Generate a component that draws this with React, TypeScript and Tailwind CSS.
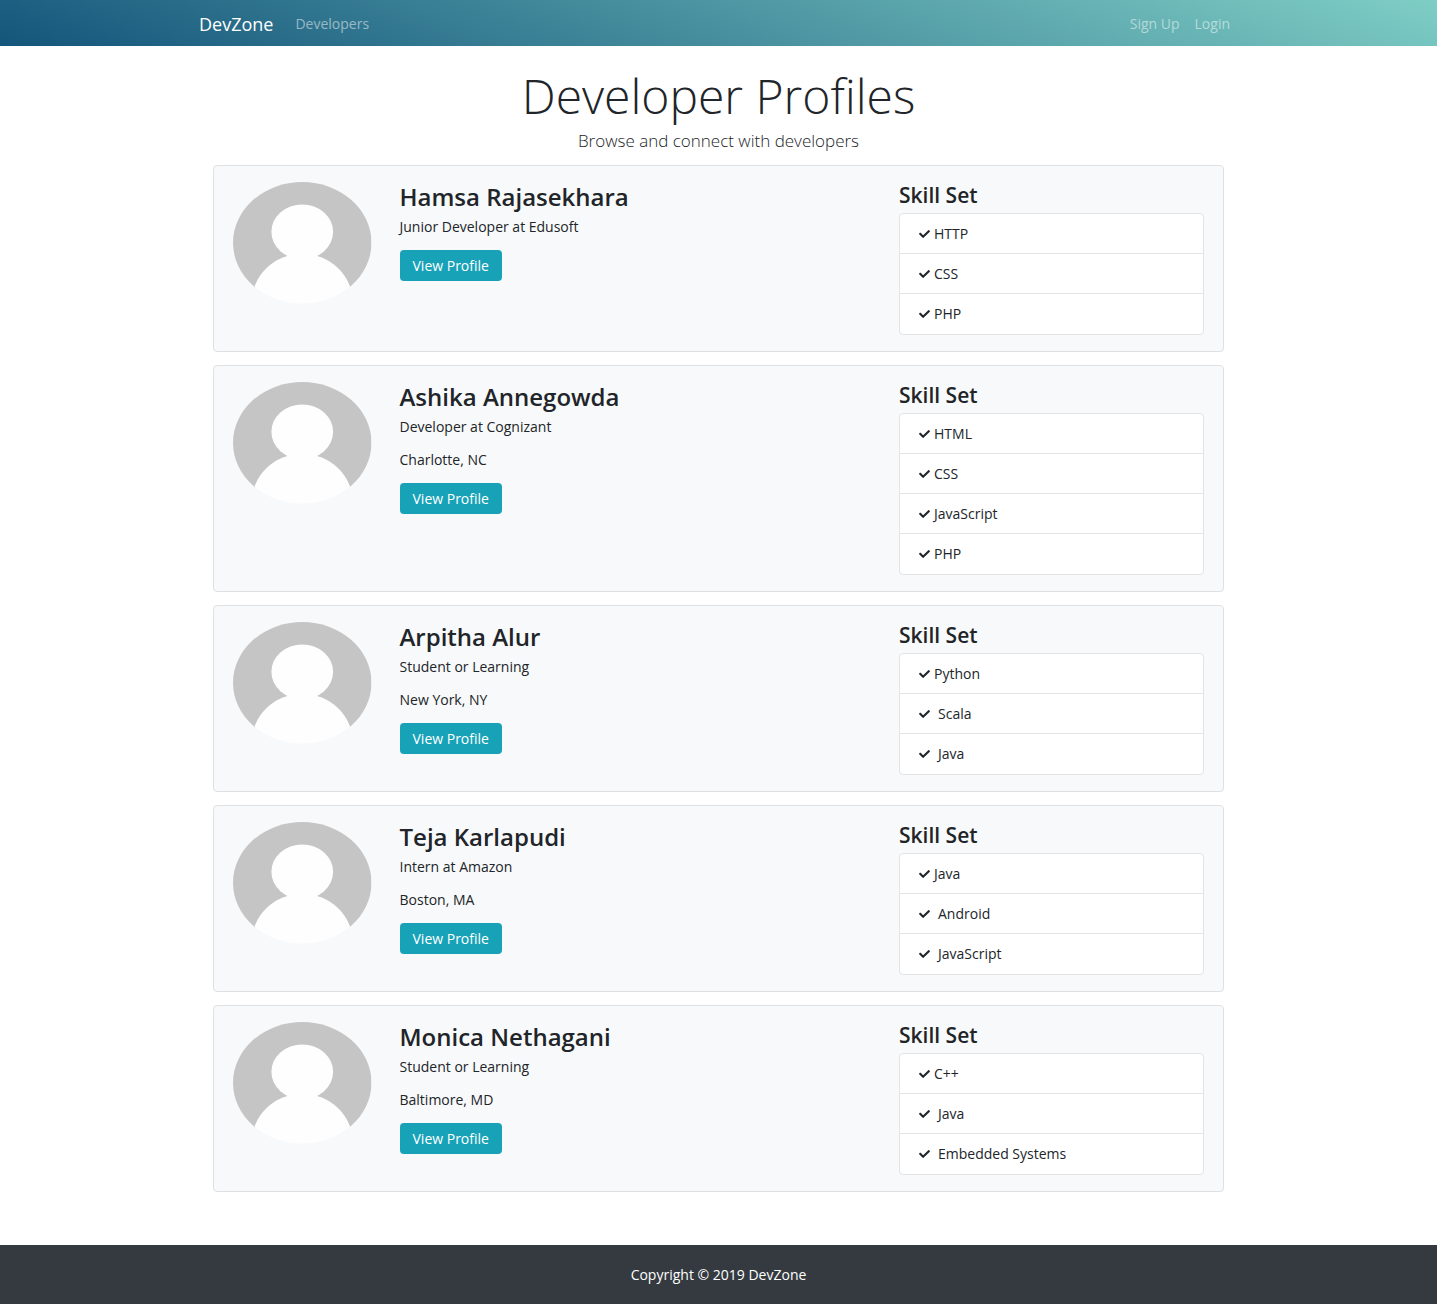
type Skill = { name: string; spaced?: boolean };

type Developer = {
  name: string;
  role: string;
  location?: string;
  skills: Skill[];
};

const developers: Developer[] = [
  {
    name: 'Hamsa Rajasekhara',
    role: 'Junior Developer at Edusoft',
    skills: [{ name: 'HTTP' }, { name: 'CSS' }, { name: 'PHP' }],
  },
  {
    name: 'Ashika Annegowda',
    role: 'Developer at Cognizant',
    location: 'Charlotte, NC',
    skills: [{ name: 'HTML' }, { name: 'CSS' }, { name: 'JavaScript' }, { name: 'PHP' }],
  },
  {
    name: 'Arpitha Alur',
    role: 'Student or Learning',
    location: 'New York, NY',
    skills: [{ name: 'Python' }, { name: 'Scala', spaced: true }, { name: 'Java', spaced: true }],
  },
  {
    name: 'Teja Karlapudi',
    role: 'Intern at Amazon',
    location: 'Boston, MA',
    skills: [{ name: 'Java' }, { name: 'Android', spaced: true }, { name: 'JavaScript', spaced: true }],
  },
  {
    name: 'Monica Nethagani',
    role: 'Student or Learning',
    location: 'Baltimore, MD',
    skills: [{ name: 'C++' }, { name: 'Java', spaced: true }, { name: 'Embedded Systems', spaced: true }],
  },
];

function Avatar({ id, name }: { id: string; name: string }) {
  return (
    <svg viewBox="0 0 139 122" className="block w-full" role="img" aria-label={name}>
      <clipPath id={id}>
        <ellipse cx="69.5" cy="61" rx="69.5" ry="61" />
      </clipPath>
      <g clipPath={`url(#${id})`}>
        <path d="M0 0h139v106H0z" fill="#c5c5c5" />
        <ellipse cx="69.5" cy="50" rx="31" ry="27.5" fill="#fefefe" />
        <ellipse cx="69.5" cy="122" rx="51" ry="50" fill="#fefefe" />
      </g>
    </svg>
  );
}

function CheckIcon() {
  return (
    <svg
      viewBox="0 65.98 512 380.04"
      preserveAspectRatio="none"
      className="h-2 w-[11px] shrink-0"
      fill="currentColor"
      aria-hidden="true"
    >
      <path d="M173.898 439.404l-166.4-166.4c-9.997-9.997-9.997-26.206 0-36.204l36.203-36.204c9.997-9.998 26.207-9.998 36.204 0L192 312.69 432.095 72.596c9.997-9.997 26.207-9.997 36.204 0l36.203 36.204c9.997 9.997 9.997 26.206 0 36.204l-294.4 294.401c-9.998 9.997-26.207 9.997-36.204-.001z" />
    </svg>
  );
}

function DeveloperCard({ developer, id }: { developer: Developer; id: string }) {
  return (
    <li className="grid grid-cols-12 gap-7 rounded border border-[#dfe0e1] bg-[#f8f9fa] px-[19px] py-4">
      <div className="col-span-2">
        <Avatar id={id} name={developer.name} />
      </div>
      <div className="col-span-6">
        <h3 className="mb-[5px] text-2xl leading-[30px] font-semibold">{developer.name}</h3>
        <p className="mb-[13px] leading-5">{developer.role}</p>
        {developer.location && <p className="mb-[13px] leading-5">{developer.location}</p>}
        <a
          href="#profile"
          className="inline-block rounded bg-[#17a2b8] px-[13px] py-1 leading-[23px] text-white hover:bg-[#138496]"
        >
          View Profile
        </a>
      </div>
      <div className="col-span-4">
        <h4 className="mb-[5px] text-[21px] leading-[26px] font-semibold">Skill Set</h4>
        <ul className="divide-y divide-[#e3e4e5] rounded border border-[#e3e4e5] bg-white">
          {developer.skills.map((skill) => (
            <li key={skill.name} className="flex h-10 items-center gap-1 px-[19px]">
              <CheckIcon />
              <span className={skill.spaced ? 'pl-1' : ''}>{skill.name}</span>
            </li>
          ))}
        </ul>
      </div>
    </li>
  );
}

export default function App() {
  return (
    <div className="flex min-h-screen flex-col bg-white font-['Open_Sans','Noto_Sans',sans-serif] text-sm text-[#212529]">
      <nav className="bg-[linear-gradient(20deg,#14557b,#7fcec5)]">
        <div className="mx-auto flex h-[46px] max-w-[1039px] items-center pt-px pr-2">
          <a href="#home" className="text-lg leading-7 text-white">
            DevZone
          </a>
          <a href="#developers" className="ml-[22px] text-white/50 hover:text-white/75">
            Developers
          </a>
          <div className="ml-auto flex gap-[15px]">
            <a href="#signup" className="text-white/50 hover:text-white/75">
              Sign Up
            </a>
            <a href="#login" className="text-white/50 hover:text-white/75">
              Login
            </a>
          </div>
        </div>
      </nav>

      <main className="mx-auto w-full max-w-[1011px] pt-[21px] pb-[53px]">
        <h1 className="text-center text-5xl leading-[58px] font-light">Developer Profiles</h1>
        <p className="mt-1 mb-3 text-center text-[17px] leading-6 font-light">
          Browse and connect with developers
        </p>
        <ul className="flex flex-col gap-[13px]">
          {developers.map((developer, index) => (
            <DeveloperCard key={developer.name} developer={developer} id={`avatar-${index}`} />
          ))}
        </ul>
      </main>

      <footer className="mt-auto bg-[#343a40] py-5 text-center leading-[19px] text-white">
        Copyright © 2019 DevZone
      </footer>
    </div>
  );
}
